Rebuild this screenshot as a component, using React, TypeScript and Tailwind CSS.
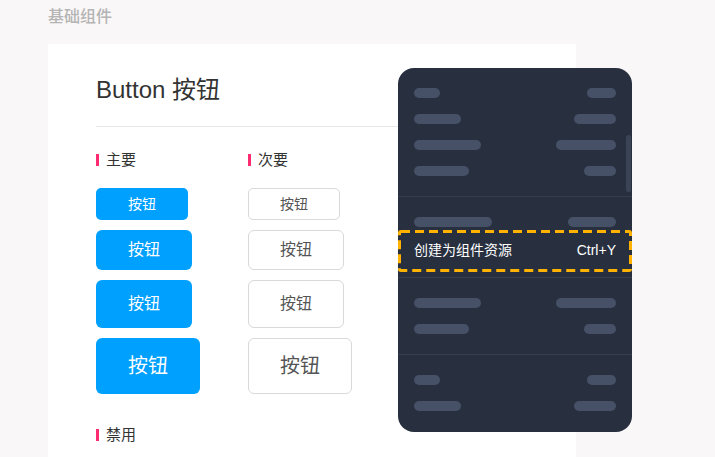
import React from "react";

const FONT = '"Liberation Sans", "Noto Sans CJK SC", sans-serif';

function Label({ text }: { text: string }) {
  return (
    <div className="flex items-center h-[20px]">
      <span className="w-[3px] h-[12px] bg-[#ff2d6f]" />
      <span className="ml-[7px] text-[15px] leading-[20px] text-[#333]">{text}</span>
    </div>
  );
}

type Btn = { w: string; h: string; fs: string; r: string };

const sizes: Btn[] = [
  { w: "w-[92px]", h: "h-[32px]", fs: "text-[14px]", r: "rounded-[5px]" },
  { w: "w-[96px]", h: "h-[40px]", fs: "text-[16px]", r: "rounded-[6px]" },
  { w: "w-[96px]", h: "h-[48px]", fs: "text-[16px]", r: "rounded-[6px]" },
  { w: "w-[104px]", h: "h-[56px]", fs: "text-[20px]", r: "rounded-[6px]" },
];

function Bar({ w }: { w: number }) {
  return <span className="h-[10px] rounded-full bg-[#465168]" style={{ width: w }} />;
}

function Item({ l, r }: { l: number; r: number }) {
  return (
    <div className="h-[26px] px-[16px] flex items-center justify-between">
      <Bar w={l} />
      <Bar w={r} />
    </div>
  );
}

export default function App() {
  return (
    <div
      className="relative w-[715px] h-[457px] overflow-hidden bg-[#faf7f8]"
      style={{ fontFamily: FONT }}
    >
      <div className="h-[44px] pl-[48px] pt-[5px] text-[16px] leading-[24px] text-[#b4b4b4] font-medium">
        基础组件
      </div>
      <div className="ml-[48px] w-[528px] h-[420px] bg-white px-[48px] pt-[30px]">
        <div className="text-[24px] leading-[32px] text-[#333]">Button 按钮</div>
        <div className="mt-[20px] h-px bg-[#e8e8e8]" />
        <div className="mt-[23px] flex">
          <div className="w-[152px] flex flex-col">
            <Label text="主要" />
            <div className="mt-[18px] flex flex-col gap-[10px]">
              {sizes.map((s, i) => (
                <div
                  key={i}
                  className={`${s.w} ${s.h} ${s.r} ${s.fs} bg-[#00a0ff] text-white flex items-center justify-center`}
                >
                  按钮
                </div>
              ))}
            </div>
          </div>
          <div className="flex flex-col">
            <Label text="次要" />
            <div className="mt-[18px] flex flex-col gap-[10px]">
              {sizes.map((s, i) => (
                <div
                  key={i}
                  className={`${s.w} ${s.h} ${s.r} ${s.fs} border border-[#d9d9d9] bg-white text-[#555] flex items-center justify-center`}
                >
                  按钮
                </div>
              ))}
            </div>
          </div>
        </div>
        <div className="mt-[31px]">
          <Label text="禁用" />
        </div>
      </div>

      {/* context menu overlay */}
      <div className="absolute left-[398px] top-[68px] w-[234px] h-[364px] rounded-[16px] bg-[#28303f] overflow-hidden">
        <div className="absolute right-[1px] top-[67px] w-[5px] h-[57px] rounded-full bg-[#3b4457]" />
        <div className="py-[12px]">
          <Item l={26} r={29} />
          <Item l={47} r={42} />
          <Item l={67} r={60} />
          <Item l={55} r={32} />
        </div>
        <div className="h-px bg-[#343c4e]" />
        <div className="py-[12px]">
          <Item l={78} r={48} />
          <div className="relative h-[30px] px-[16px] flex items-center justify-between text-[14px] text-white">
            <span>创建为组件资源</span>
            <span>Ctrl+Y</span>
          </div>
        </div>
        <div className="h-px bg-[#343c4e]" />
        <div className="py-[12px]">
          <Item l={67} r={60} />
          <Item l={55} r={32} />
        </div>
        <div className="h-px bg-[#343c4e]" />
        <div className="py-[12px]">
          <Item l={26} r={29} />
          <Item l={47} r={42} />
        </div>
      </div>
      <svg
        className="absolute left-[398px] top-[230px]"
        width="234"
        height="42"
        viewBox="0 0 234 42"
      >
        <rect
          x="1.5"
          y="1.5"
          width="231"
          height="39"
          rx="1.5"
          fill="none"
          stroke="#ffb300"
          strokeWidth="3"
          strokeDasharray="9 5"
        />
      </svg>
    </div>
  );
}
